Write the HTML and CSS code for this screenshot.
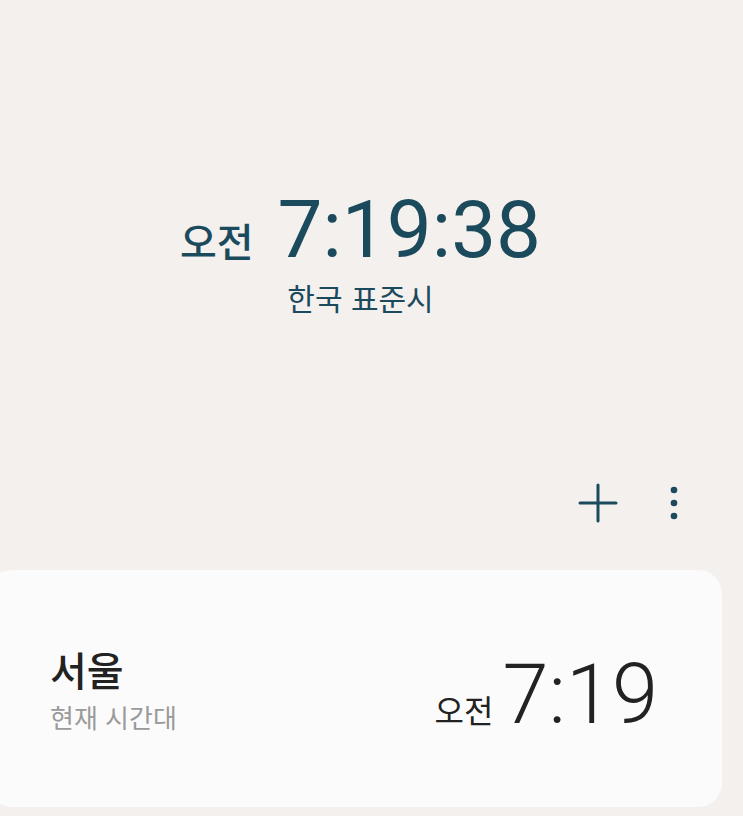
FILE: index.html
```html
<!DOCTYPE html>
<html lang="ko">
<head>
<meta charset="utf-8">
<link rel="stylesheet" href="styles.css">
</head>
<body>
<main class="screen">
  <section class="hero">
    <div class="hero-time">
      <span class="hero-ampm">오전</span>
      <span class="hero-clock">7:19:38</span>
    </div>
    <div class="hero-zone">한국 표준시</div>
  </section>

  <div class="actions">
    <button class="icon-btn" aria-label="추가">
      <svg width="40" height="40" viewBox="0 0 40 40"><path d="M20 2 V38 M2 20 H38" stroke="#1b4a5c" stroke-width="3" stroke-linecap="round" fill="none"/></svg>
    </button>
    <button class="icon-btn dots" aria-label="더보기">
      <svg width="12" height="40" viewBox="0 0 12 40"><circle cx="6" cy="7" r="3.3" fill="#1b4a5c"/><circle cx="6" cy="20" r="3.3" fill="#1b4a5c"/><circle cx="6" cy="33" r="3.3" fill="#1b4a5c"/></svg>
    </button>
  </div>

  <section class="card">
    <div class="city">
      <div class="city-name">서울</div>
      <div class="city-sub">현재 시간대</div>
    </div>
    <div class="city-time">
      <span class="city-ampm">오전</span>
      <span class="city-clock">7:19</span>
    </div>
  </section>
</main>
</body>
</html>
```

FILE: styles.css
```css
html, body {
  margin: 0;
  padding: 0;
}
body {
  background: #f4f0ee;
  font-family: "Noto Sans CJK KR", "Noto Sans", sans-serif;
  width: 743px;
  height: 816px;
  overflow: hidden;
}
.screen {
  display: flex;
  flex-direction: column;
}
.hero {
  display: flex;
  flex-direction: column;
  align-items: center;
  padding-top: 190px;
  padding-right: 22px;
  color: #1b4a5c;
}
.hero-time {
  display: flex;
  align-items: baseline;
  gap: 24px;
}
.hero-ampm {
  font-size: 40px;
  line-height: 1;
  font-weight: 500;
}
.hero-clock {
  font-family: Roboto, "Noto Sans", sans-serif;
  font-size: 80px;
  line-height: 1;
  font-weight: 400;
}
.hero-zone {
  font-size: 30px;
  line-height: 1;
  margin-top: 12px;
  font-weight: 400;
}
.actions {
  display: flex;
  justify-content: flex-end;
  align-items: center;
  gap: 50px;
  margin-top: 171px;
  padding-right: 63px;
}
.icon-btn {
  border: 0;
  background: none;
  padding: 0;
  display: flex;
  align-items: center;
  justify-content: center;
}
.card {
  margin-top: 47px;
  margin-left: -12px;
  width: 734px;
  height: 237px;
  box-sizing: border-box;
  background: #fcfbfb;
  border-radius: 24px;
  display: flex;
  align-items: center;
  justify-content: space-between;
  padding: 8px 64px 0 62px;
}
.city {
  display: flex;
  flex-direction: column;
  padding-bottom: 10px;
}
.city-name {
  font-size: 40px;
  line-height: 1.45;
  color: #222;
  font-weight: 500;
}
.city-sub {
  font-size: 26px;
  line-height: 1.45;
  color: #9a9a9a;
}
.city-time {
  display: flex;
  align-items: baseline;
  gap: 9px;
  color: #222;
  padding-top: 4px;
}
.city-ampm {
  font-size: 32px;
  line-height: 1;
}
.city-clock {
  font-family: Roboto, "Noto Sans", sans-serif;
  font-size: 83px;
  line-height: 1;
  font-weight: 300;
}
```
